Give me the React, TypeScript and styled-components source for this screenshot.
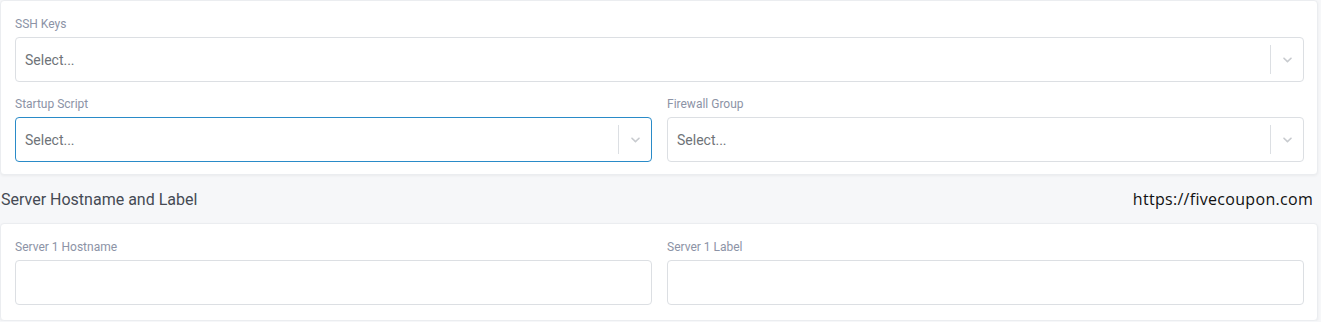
import React from "react";
import styled, { createGlobalStyle } from "styled-components";

const GlobalStyle = createGlobalStyle`
  html, body {
    margin: 0;
    padding: 0;
    background: #f6f7f9;
    font-family: Roboto, "Liberation Sans", sans-serif;
  }
`;

const Page = styled.div`
  width: 1318px;
  display: flex;
  flex-direction: column;
`;

const Card = styled.div<{ $bottom?: number }>`
  background: #fff;
  border: 1px solid #ebedf0;
  border-radius: 4px;
  box-shadow: 0 1px 3px rgba(0, 0, 0, 0.05);
  padding: 15px 13px ${(p) => p.$bottom ?? 12}px 14px;
  display: flex;
  flex-direction: column;
  gap: 14px;
`;

const Row = styled.div<{ $cols: number }>`
  display: grid;
  grid-template-columns: repeat(${(p) => p.$cols}, 1fr);
  gap: 15px;
`;

const Field = styled.div`
  display: flex;
  flex-direction: column;
`;

const Label = styled.label`
  font-size: 12px;
  line-height: 16px;
  color: #8c93a6;
  margin-bottom: 5px;
`;

const SelectBox = styled.div<{ $focused?: boolean }>`
  height: 45px;
  box-sizing: border-box;
  border: 1px solid ${(p) => (p.$focused ? "#2a8bc8" : "#dcdfe3")};
  border-radius: 4px;
  background: #fff;
  display: flex;
  align-items: center;
`;

const Placeholder = styled.span`
  flex: 1;
  padding-left: 9px;
  font-size: 14px;
  color: #6e7378;
`;

const Separator = styled.span`
  width: 1px;
  height: 29px;
  background: #dcdfe3;
`;

const Indicator = styled.span`
  width: 32px;
  display: flex;
  align-items: center;
  justify-content: center;
  color: #c8cbcf;
`;

const TextInput = styled.input`
  height: 45px;
  box-sizing: border-box;
  border: 1px solid #dcdfe3;
  border-radius: 4px;
  background: #fff;
  outline: none;
  padding: 0 9px;
  font-family: inherit;
  font-size: 14px;
`;

const SectionHead = styled.div`
  display: flex;
  justify-content: space-between;
  align-items: center;
  height: 48px;
  padding: 0 5px 0 1px;
`;

const SectionTitle = styled.h3`
  margin: 0;
  font-size: 16px;
  font-weight: 400;
  color: #454a54;
`;

const Watermark = styled.span`
  font-family: "Open Sans", "Noto Sans", sans-serif;
  font-size: 16px;
  letter-spacing: 0.3px;
  color: #111;
`;

const Chevron = () => (
  <svg width="15" height="15" viewBox="0 0 20 20" fill="currentColor">
    <path d="M4.516 7.548c0.436-0.446 1.043-0.481 1.576 0l3.908 3.747 3.908-3.747c0.533-0.481 1.141-0.446 1.574 0 0.436 0.445 0.408 1.197 0 1.615-0.406 0.418-4.695 4.502-4.695 4.502-0.217 0.223-0.502 0.335-0.787 0.335s-0.57-0.112-0.789-0.335c0 0-4.287-4.084-4.695-4.502s-0.436-1.170 0-1.615z" />
  </svg>
);

const Select = ({ focused }: { focused?: boolean }) => (
  <SelectBox $focused={focused}>
    <Placeholder>Select...</Placeholder>
    <Separator />
    <Indicator>
      <Chevron />
    </Indicator>
  </SelectBox>
);

const App = () => {
  return (
    <>
      <GlobalStyle />
      <Page>
        <Card>
          <Row $cols={1}>
            <Field>
              <Label>SSH Keys</Label>
              <Select />
            </Field>
          </Row>
          <Row $cols={2}>
            <Field>
              <Label>Startup Script</Label>
              <Select focused />
            </Field>
            <Field>
              <Label>Firewall Group</Label>
              <Select />
            </Field>
          </Row>
        </Card>
        <SectionHead>
          <SectionTitle>Server Hostname and Label</SectionTitle>
          <Watermark>https://fivecoupon.com</Watermark>
        </SectionHead>
        <Card $bottom={15}>
          <Row $cols={2}>
            <Field>
              <Label>Server 1 Hostname</Label>
              <TextInput />
            </Field>
            <Field>
              <Label>Server 1 Label</Label>
              <TextInput />
            </Field>
          </Row>
        </Card>
      </Page>
    </>
  );
};

export default App;
